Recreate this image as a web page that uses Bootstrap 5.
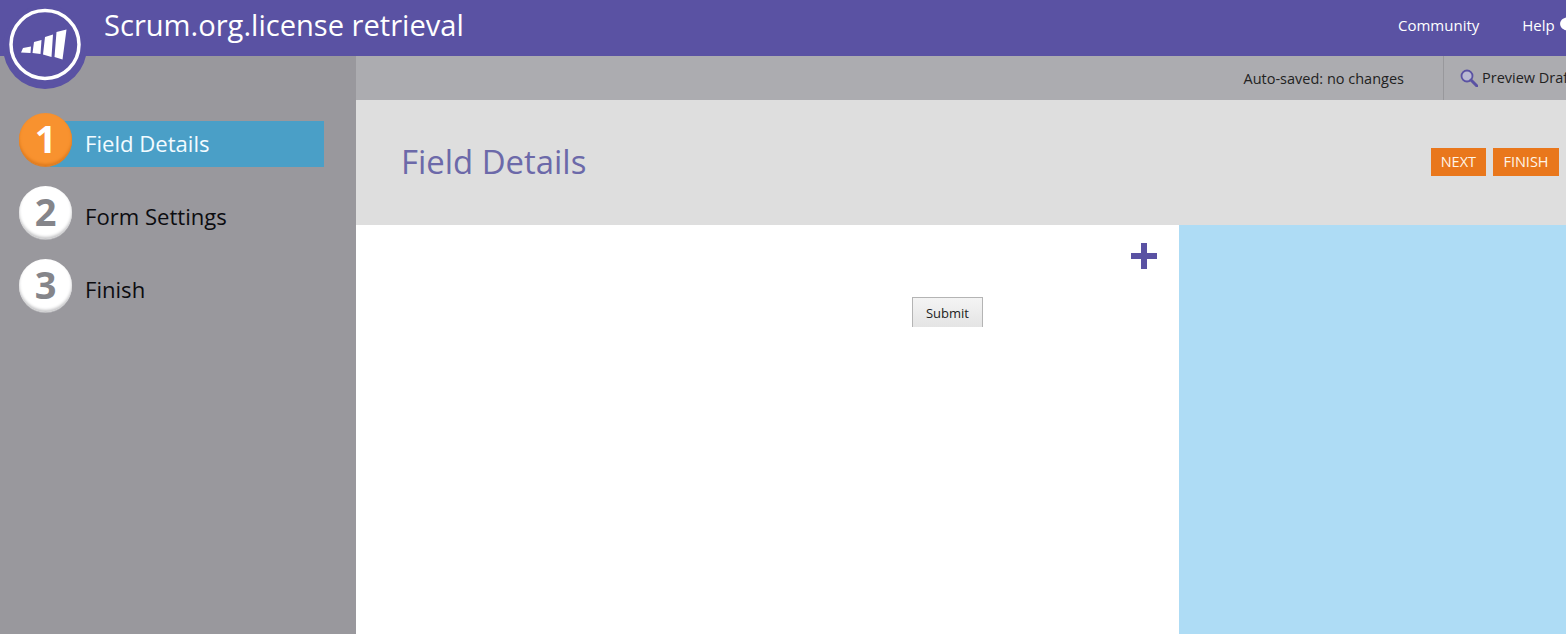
<!DOCTYPE html>
<html lang="en">
<head>
    <meta charset="UTF-8">
    <meta name="viewport" content="width=device-width, initial-scale=1.0">
    <title>Scrum.org.license retrieval</title>
    <link href="https://cdn.jsdelivr.net/npm/bootstrap@5.3.0/dist/css/bootstrap.min.css" rel="stylesheet">
    <style>
        html, body { height: 100%; overflow: hidden; }
        body { font-family: "Open Sans", "Liberation Sans", sans-serif; background: #99989d; }
        .shell { height: 634px; width: 1566px; position: relative; overflow: hidden; }
        .topbar { height: 56px; background: #5a52a3; color: #fff; padding-left: 104px; }
        .topbar-title { font-size: 29.1px; line-height: 50px; }
        .topbar-nav { width: 168px; height: 50px; font-size: 15px; overflow: hidden; white-space: nowrap; gap: 43px; }
        .logo-badge { position: absolute; left: 3px; top: 3px; width: 84px; height: 86px; }
        .sidebar { width: 356px; flex: none; padding: 57px 32px 0 19px; background: #99989d; }
        .step-row { height: 53px; margin-bottom: 20px; position: relative; font-size: 22.1px; color: #0c0c10; }
        .step-label { position: relative; flex: 1; height: 46px; margin-top: 8px; margin-left: -22px; padding-left: 35px; line-height: 44px; }
        .step-row.active .step-label { background: #4a9fc7; color: #f2fbff; }
        .step-dot { width: 53px; height: 53px; border-radius: 50%; background: #fff; color: #85858a; font-size: 38px; font-weight: 700; line-height: 50px; text-align: center; position: relative; z-index: 1; box-shadow: inset 0 -2px 3px #c4c4c6, 0 1px 0 #bdbdc0; flex: none; }
        .step-row.active .step-dot { background: #f8922f; color: #fff; box-shadow: inset 0 -2px 3px #dd7a1e, 0 1px 0 #d9802c; }
        .toolbar { height: 44px; background: #acacb0; font-size: 14.5px; color: #222; white-space: nowrap; overflow: hidden; justify-content: flex-end; }
        .autosave { margin-right: 39px; line-height: 46px; }
        .preview-box { width: 123px; flex: none; border-left: 1px solid #98989c; padding-left: 16px; line-height: 44px; gap: 4px; }
        .page-head { height: 125px; background: #dedede; padding: 0 7px 0 45px; }
        .page-head h1 { font-size: 32.9px; font-weight: 400; color: #6c69a9; margin: 0 0 1px; }
        .btn-orange { background: #e9771c; color: #fff5e8; border: 0; border-radius: 0; font-size: 14.5px; height: 28px; padding: 0 10px; line-height: 26px; }
        .btn-orange:hover { background: #e9771c; color: #fff5e8; }
        .btn-finish { width: 66px; padding: 0; }
        .head-actions { gap: 7px; margin-bottom: 2px; }
        .canvas-pane { width: 823px; flex: none; background: #fff; position: relative; }
        .preview-pane { flex: 1; background: #aedcf5; }
        .add-field { padding: 17px 21px 0 0; height: 72px; }
        .submit-btn { margin-left: 556px; width: 71px; height: 30px; font-size: 13px; color: #222; background: linear-gradient(#f4f4f4, #e4e4e4); border: 1px solid #b4b4b4; border-bottom: 0; border-radius: 0; padding: 2px 0 0; display: block; }
    </style>
</head>
<body>
    <div class="shell d-flex flex-column">
        <!-- Header -->
        <div class="topbar d-flex justify-content-between">
            <div class="topbar-title">Scrum.org.license retrieval</div>
            <div class="topbar-nav d-flex align-items-center">
                <span>Community</span>
                <span class="d-flex align-items-center gap-1">Help
                    <svg width="20" height="18" viewBox="0 0 18 16"><path fill="#fff" d="M9 1C4.6 1 1 3.600 1 7s3.600 6 8 6l-1 3 5-3.600c2.400-1 4-3 4-5.400 0-3.400-3.600-6-8-6z"/></svg>
                </span>
            </div>
        </div>

        <svg class="logo-badge" viewBox="0 0 84 86">
            <circle cx="42" cy="44" r="42" fill="#5a52a3"/>
            <circle cx="42" cy="41.500" r="34" fill="none" stroke="#fff" stroke-width="3.500"/>
            <path fill="#fff" d="M20 45l8-1.500-.5 6.500-9.500-.5zM31 39l7.500-2-1 14-8-1zM42 34l8-2.500-1.500 22.500-8.500-2.500zM53.500 29l10-2.500-4 30-8-2.500z"/>
        </svg>

        <div class="d-flex flex-grow-1">
            <!-- Steps -->
            <div class="sidebar">
                <div class="step-row active d-flex">
                    <div class="step-dot">1</div>
                    <div class="step-label">Field Details</div>
                </div>
                <div class="step-row d-flex">
                    <div class="step-dot">2</div>
                    <div class="step-label">Form Settings</div>
                </div>
                <div class="step-row d-flex">
                    <div class="step-dot">3</div>
                    <div class="step-label">Finish</div>
                </div>
            </div>

            <div class="flex-grow-1 d-flex flex-column">
                <div class="toolbar d-flex">
                    <span class="autosave">Auto-saved: no changes</span>
                    <div class="preview-box d-flex align-items-center">
                        <svg width="18" height="18" viewBox="0 0 18 18" class="flex-shrink-0">
                            <circle cx="7" cy="7" r="5.500" fill="#b9b9d2" stroke="#5a52a3" stroke-width="1.800"/>
                            <path d="M11 11l6 6" stroke="#5a52a3" stroke-width="3" stroke-linecap="round"/>
                        </svg>
                        <span>Preview Draft</span>
                    </div>
                </div>
                <div class="page-head d-flex justify-content-between align-items-center">
                    <h1>Field Details</h1>
                    <div class="head-actions d-flex">
                        <button class="btn btn-orange">NEXT</button>
                        <button class="btn btn-orange btn-finish">FINISH</button>
                    </div>
                </div>
                <div class="d-flex flex-grow-1">
                    <div class="canvas-pane">
                        <div class="add-field d-flex justify-content-end">
                            <svg width="28" height="28" viewBox="0 0 28 28"><path fill="#5a52a3" d="M11 1h6v10h10v6H17v10h-6V17H1v-6h10z"/></svg>
                        </div>
                        <button class="submit-btn" type="button">Submit</button>
                    </div>
                    <div class="preview-pane"></div>
                </div>
            </div>
        </div>
    </div>
    <script src="https://cdn.jsdelivr.net/npm/bootstrap@5.3.0/dist/js/bootstrap.bundle.min.js"></script>
</body>
</html>
